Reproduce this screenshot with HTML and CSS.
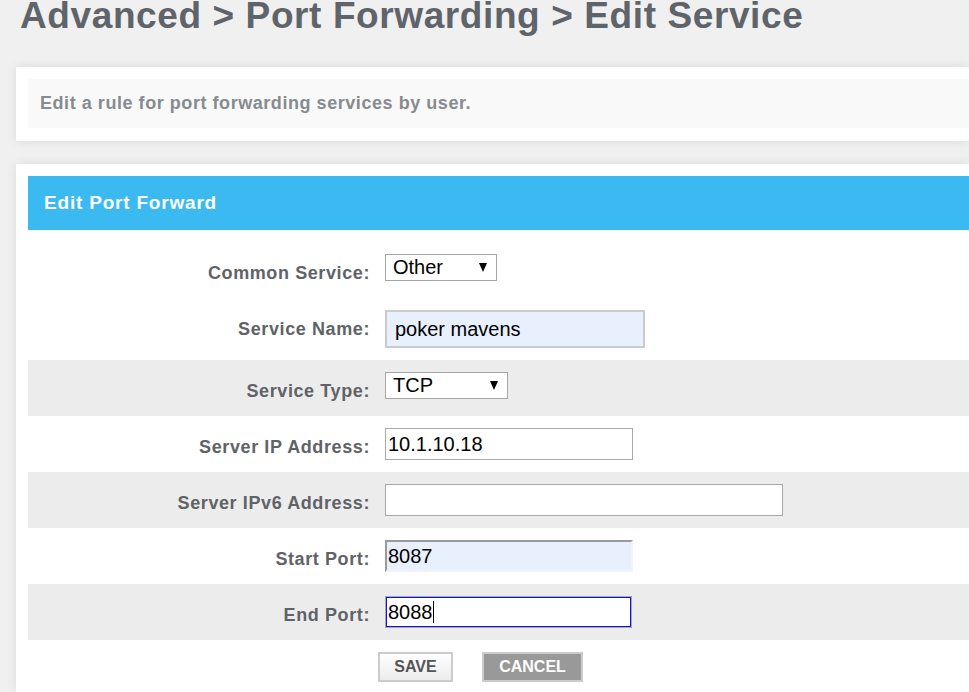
FILE: index.html
```
<!DOCTYPE html>
<html lang="en">
<head>
<meta charset="utf-8">
<title>Edit Service</title>
<link rel="stylesheet" href="styles.css">
</head>
<body>
<h1 class="title">Advanced &gt; Port Forwarding &gt; Edit Service</h1>

<section class="panel intro">
  <div class="note">Edit a rule for port forwarding services by user.</div>
</section>

<section class="panel main">
  <div class="head">Edit Port Forward</div>
  <div class="form">
    <div class="row">
      <label class="lbl">Common Service:</label>
      <div class="select sel-common"><span class="val">Other</span><span class="arrow"></span></div>
    </div>
    <div class="row">
      <label class="lbl lbl-tall">Service Name:</label>
      <input class="text auto name" type="text" value="poker mavens">
    </div>
    <div class="row alt">
      <label class="lbl">Service Type:</label>
      <div class="select sel-type"><span class="val">TCP</span><span class="arrow"></span></div>
    </div>
    <div class="row">
      <label class="lbl">Server IP Address:</label>
      <input class="text w248" type="text" value="10.1.10.18">
    </div>
    <div class="row alt">
      <label class="lbl">Server IPv6 Address:</label>
      <input class="text w398" type="text" value="">
    </div>
    <div class="row">
      <label class="lbl">Start Port:</label>
      <input class="text inset w248" type="text" value="8087">
    </div>
    <div class="row alt">
      <label class="lbl">End Port:</label>
      <div class="text focus w247"><span>8088</span><span class="caret"></span></div>
    </div>
    <div class="actions">
      <button class="btn save" type="button">SAVE</button>
      <button class="btn cancel" type="button">CANCEL</button>
    </div>
  </div>
</section>
</body>
</html>
```

FILE: styles.css
```
html {
  overflow: hidden;
}
body {
  margin: 0;
  background: #f0f0f0;
  font-family: "Liberation Sans", Arial, sans-serif;
}
.title {
  margin: 0 0 36px 20px;
  font-size: 37px;
  line-height: 31px;
  font-weight: bold;
  letter-spacing: 0.6px;
  color: #5f646a;
}
.panel {
  margin-left: 16px;
  background: #fff;
  box-shadow: 0 0 10px rgba(0, 0, 0, 0.09);
}
.intro {
  padding: 12px 0 13px 12px;
}
.note {
  height: 49px;
  line-height: 49px;
  padding-left: 12px;
  background: #f9f9f9;
  font-size: 18px;
  font-weight: bold;
  letter-spacing: 0.55px;
  color: #868b90;
}
.main {
  margin-top: 23px;
  padding: 12px 0 0 12px;
}
.head {
  height: 54px;
  line-height: 54px;
  padding-left: 16px;
  background: #3bb9f1;
  color: #fff;
  font-size: 19px;
  font-weight: bold;
  letter-spacing: 0.8px;
}
.form {
  margin-top: 12px;
}
.row {
  display: grid;
  grid-template-columns: 342px 1fr;
  column-gap: 15px;
  align-items: center;
  justify-items: start;
  box-sizing: border-box;
  min-height: 56px;
  padding: 12px 0;
}
.row.alt {
  background: #ececec;
}
.lbl {
  justify-self: end;
  font-size: 18px;
  font-weight: bold;
  letter-spacing: 0.6px;
  color: #5f6368;
  padding-top: 6px;
}
.lbl-tall {
  padding-top: 0;
}
.select {
  align-self: start;
  display: flex;
  align-items: center;
  justify-content: space-between;
  box-sizing: border-box;
  height: 27px;
  padding: 0 9px 0 7px;
  border: 1px solid #a6a6a6;
  background: #fff;
  font-size: 20px;
  color: #000;
}
.sel-common {
  width: 112px;
}
.sel-type {
  width: 123px;
}
.arrow {
  width: 0;
  height: 0;
  border-left: 4px solid transparent;
  border-right: 4px solid transparent;
  border-top: 9px solid #000;
}
.text {
  box-sizing: border-box;
  height: 32px;
  margin: 0;
  padding: 0 2px;
  border: 1px solid #a9a9a9;
  background: #fff;
  font-family: "Liberation Sans", Arial, sans-serif;
  font-size: 20px;
  color: #000;
  outline: none;
}
.name {
  width: 260px;
  height: 38px;
  padding: 0 8px;
  border: 2px solid #cbcbcb;
}
.auto {
  background: #e8f0fe;
}
.w248 {
  width: 248px;
}
.w398 {
  width: 398px;
}
.w247 {
  width: 247px;
}
.inset {
  padding: 0 1px;
  border-width: 2px;
  border-style: solid;
  border-color: #9a9a9a #eef3fc #eef3fc #9a9a9a;
  background: #e8f0fe;
}
.focus {
  display: flex;
  align-items: center;
  box-shadow: inset 0 0 0 1px #1010e8;
}
.caret {
  width: 1px;
  height: 22px;
  background: #000;
}
.actions {
  display: flex;
  gap: 29px;
  padding: 12px 0 10px 350px;
}
.btn {
  box-sizing: border-box;
  height: 30px;
  margin: 0;
  padding: 0;
  border: 2px solid #cccccc;
  font-family: "Liberation Sans", Arial, sans-serif;
  font-size: 16px;
  font-weight: bold;
}
.save {
  width: 75px;
  background: linear-gradient(#ffffff, #ececec);
  color: #555555;
}
.cancel {
  width: 101px;
  background: #999999;
  color: #ffffff;
}
```
